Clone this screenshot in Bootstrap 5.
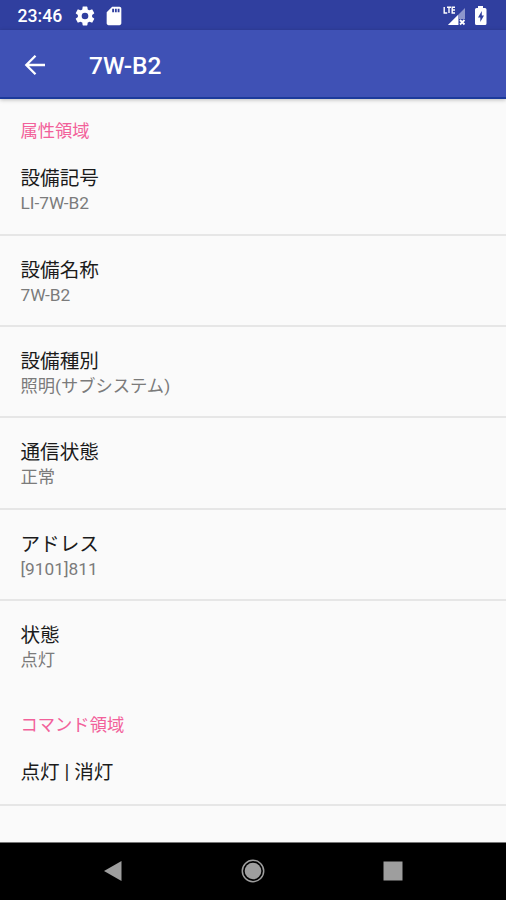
<!DOCTYPE html>
<html lang="ja">
<head>
<meta charset="utf-8">
<meta name="viewport" content="width=device-width, initial-scale=1">
<title>7W-B2</title>
<link href="https://cdn.jsdelivr.net/npm/bootstrap@5.3.0/dist/css/bootstrap.min.css" rel="stylesheet">
<style>
body{font-family:Roboto,"Noto Sans CJK JP",sans-serif;background:#fafafa;height:900px;overflow:hidden}
svg{display:block;flex:none}
.status{height:30px;background:#303f9f;color:#fff;padding:1px 18px 0 17.5px;font-size:17.6px;font-weight:500;line-height:30px}
.status-icons{margin-left:13px;gap:8px}
.appbar{height:69px;background:#3f51b5;color:#fff;padding:2px 22px 0;border-bottom:2px solid #1c3a9b;box-shadow:0 1px 4px rgba(0,0,0,.25);z-index:1}
.appbar h1{font-size:24.5px;font-weight:500;margin:2px 0 0 41px;line-height:30px}
.category{height:45.4px;padding:20.4px 20.5px 0;font-size:17.3px;line-height:24px;color:#f2619a}
.pref{height:91.3px;padding:22px 20.5px 0;border-bottom:2px solid #e6e6e6}
.pref-title{font-size:19.6px;line-height:26px;color:#1b1b1b}
.pref-value{font-size:17.3px;line-height:24px;margin-top:-1px;color:#7b7b7b}
.pref.last{border-color:transparent}
.pref.single{height:68px}
.navkeys{height:58px;background:#000;border-top:1px solid #777;padding-bottom:2px}
.navkeys>span{width:140px}
</style>
</head>
<body class="d-flex flex-column">
<header class="status d-flex align-items-center">
  <span id="clock">23:46</span>
  <div class="status-icons d-flex align-items-center">
    <svg width="20" height="20" viewBox="1.500 1.500 21 21" fill="#fff"><path fill-rule="evenodd" d="M19.43 12.98c.04-.32.07-.64.07-.98s-.03-.66-.07-.98l2.11-1.65c.19-.15.24-.42.12-.64l-2-3.46c-.12-.22-.39-.3-.61-.22l-2.49 1c-.52-.4-1.08-.73-1.69-.98l-.38-2.65A.49.49 0 0 0 14 2h-4c-.25 0-.46.18-.49.42l-.38 2.65c-.61.25-1.17.59-1.69.98l-2.49-1c-.23-.09-.49 0-.61.22l-2 3.46c-.13.22-.07.49.12.64l2.11 1.65c-.04.32-.07.65-.07.98s.03.66.07.98l-2.11 1.65c-.19.15-.24.42-.12.64l2 3.46c.12.22.39.3.61.22l2.49-1c.52.4 1.08.73 1.69.98l.38 2.65c.03.24.24.42.49.42h4c.25 0 .46-.18.49-.42l.38-2.65c.61-.25 1.17-.59 1.69-.98l2.49 1c.23.09.49 0 .61-.22l2-3.46c.12-.22.07-.49-.12-.64zM12 15.5a3.5 3.5 0 1 1 0-7 3.5 3.5 0 0 1 0 7z"/></svg>
    <svg width="22" height="22" viewBox="0 0 24 24" fill="#fff"><path d="M18 2h-8L4.020 8 4 20c0 1.100.9 2 2 2h12c1.100 0 2-.9 2-2V4c0-1.100-.9-2-2-2zm-6 6h-2V4h2zm3 0h-2V4h2zm3 0h-2V4h2z"/></svg>
  </div>
  <svg class="ms-auto" width="23" height="20" viewBox="0 0 23 20"><path d="M22 2v17H5z" fill="#8d96cc"/><path d="M15 9v10H5z" fill="#fff"/><path d="M16 13h7v7h-7z" fill="#303f9f"/><path d="m17 14 4.500 4.500m0-4.500L17 18.500" stroke="#fff" stroke-width="1.800"/><path d="M1.200 1v6h3M4 1.200h4M6 1v6M12 1.200H9.200V7H12M9.200 4H12" fill="none" stroke="#fff" stroke-width="1.400"/></svg>
  <svg class="ms-2" width="14" height="20" viewBox="0 0 14 20"><path d="M4 0h5v2h2q1.500 0 1.500 1.500v14Q12.500 19 11 19H2.500Q1 19 1 17.500v-14Q1 2 2.500 2H4z" fill="#fff"/><path d="M7.800 5 4 11.500h2.300V16L10 9.500H7.800z" fill="#303f9f"/></svg>
</header>
<nav class="appbar d-flex align-items-center flex-shrink-0">
  <svg width="26" height="26" viewBox="0 0 26 26" fill="none" stroke="#fff" stroke-width="2.300"><path d="M23 13H5M13.500 3.800 4.300 13l9.200 9.200"/></svg>
  <h1>7W-B2</h1>
</nav>
<main class="flex-grow-1 overflow-hidden">
  <div class="category">属性領域</div>
  <div class="pref"><div class="pref-title">設備記号</div><div class="pref-value">LI-7W-B2</div></div>
  <div class="pref"><div class="pref-title">設備名称</div><div class="pref-value">7W-B2</div></div>
  <div class="pref"><div class="pref-title">設備種別</div><div class="pref-value">照明(サブシステム)</div></div>
  <div class="pref"><div class="pref-title">通信状態</div><div class="pref-value">正常</div></div>
  <div class="pref"><div class="pref-title">アドレス</div><div class="pref-value">[9101]811</div></div>
  <div class="pref last"><div class="pref-title">状態</div><div class="pref-value">点灯</div></div>
  <div class="category">コマンド領域</div>
  <div class="pref single"><div class="pref-title">点灯 | 消灯</div></div>
</main>
<footer class="navkeys d-flex justify-content-center align-items-center flex-shrink-0">
  <span class="d-flex justify-content-center"><svg width="20" height="22" viewBox="0 0 20 22"><path d="M18.500 1v20L1 11z" fill="#9e9e9e"/></svg></span>
  <span class="d-flex justify-content-center"><svg width="24" height="24" viewBox="0 0 24 24"><circle cx="12" cy="12" r="8.300" fill="#9e9e9e"/><circle cx="12" cy="12" r="10.700" fill="none" stroke="#9e9e9e" stroke-width="1.500"/></svg></span>
  <span class="d-flex justify-content-center"><svg width="20" height="20" viewBox="0 0 20 20"><path d="M.5.5h19v19H.5z" fill="#9e9e9e"/></svg></span>
</footer>
<script src="https://cdn.jsdelivr.net/npm/bootstrap@5.3.0/dist/js/bootstrap.bundle.min.js"></script>
</body>
</html>
